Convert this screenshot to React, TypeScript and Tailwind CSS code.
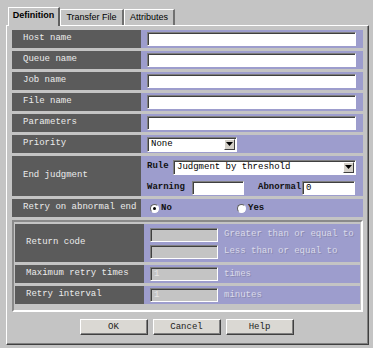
import React from 'react';

const mono = { fontFamily: '"Liberation Mono", "Courier New", monospace' };
const sans = { fontFamily: '"Liberation Sans", Arial, sans-serif' };

// sunken edit box
function Field({ w, value, disabled }: { w?: string; value?: string; disabled?: boolean }) {
  return (
    <div
      className={`h-[14px] shrink-0 ${w ?? 'flex-1'} border border-t-[#808080] border-l-[#808080] border-b-white border-r-white shadow-[inset_1px_1px_0_#404040] flex items-center pl-[3px] text-[9px] leading-none ${
        disabled ? 'bg-[#c4c4c4] text-[#e6e6e6]' : 'bg-white text-black'
      }`}
      style={mono}
    >
      {value}
    </div>
  );
}

function Select({ w, value }: { w?: string; value: string }) {
  return (
    <div
      className={`h-[15px] ${w ?? 'flex-1'} bg-white border border-t-[#808080] border-l-[#808080] border-b-white border-r-white shadow-[inset_1px_1px_0_#404040] flex items-center text-[9px] leading-none text-black`}
      style={mono}
    >
      <span className="flex-1 pl-[3px] pt-[1px]">{value}</span>
      <span className="w-[11px] h-[11px] mr-[1px] bg-[#d4d0c8] border border-t-white border-l-white border-b-[#404040] border-r-[#404040] flex items-center justify-center">
        <svg width="7" height="4" viewBox="0 0 7 4">
          <path d="M0 0h7L3.5 4z" fill="#000" />
        </svg>
      </span>
    </div>
  );
}

function Row({ label, h = 'h-[18px]', children, cls }: { label: string; h?: string; children?: React.ReactNode; cls?: string }) {
  return (
    <div className={`flex ${h}`}>
      <div
        className="w-[129px] shrink-0 bg-[#5b5b5b] text-[#ececec] text-[9px] flex items-center pl-[11px] whitespace-pre"
        style={mono}
      >
        {label}
      </div>
      <div className={`flex-1 min-w-0 bg-[#9d9dcd] pl-[6px] pr-[7px] flex ${cls ?? 'items-center'}`}>{children}</div>
    </div>
  );
}

function Radio({ on, label, w }: { on?: boolean; label: string; w?: string }) {
  return (
    <div className={`flex items-center gap-[2px] ${w ?? ''}`}>
      <span className="w-[9px] h-[9px] shrink-0 rounded-full bg-white border border-t-[#606060] border-l-[#606060] border-b-white border-r-white flex items-center justify-center">
        {on && <span className="w-[3px] h-[3px] rounded-full bg-black" />}
      </span>
      <span className="text-[9px] font-bold text-[#111] leading-none" style={mono}>
        {label}
      </span>
    </div>
  );
}

function Btn({ label }: { label: string }) {
  return (
    <button
      className="w-[68px] h-[16px] bg-[#dad8d3] border border-t-white border-l-white border-b-[#404040] border-r-[#404040] shadow-[inset_-1px_-1px_0_#808080] text-[9px] text-[#222] leading-none"
      style={mono}
    >
      {label}
    </button>
  );
}

function Dim({ children }: { children: React.ReactNode }) {
  return (
    <span className="ml-[6px] whitespace-nowrap text-[9px] leading-none text-[#dadaea] [text-shadow:1px_1px_0_#8a8ab0]" style={mono}>
      {children}
    </span>
  );
}

export default function App() {
  return (
    <div className="w-[373px] h-[348px] bg-[#c4c4c4] overflow-hidden">
      {/* tabs */}
      <div className="flex items-end pl-[8px] pt-[7px] h-[25px]" style={sans}>
        <div className="relative z-10 w-[52px] h-[19px] -mb-[1px] bg-[#c4c4c4] border-l border-t border-white border-r-2 border-r-[#606060] text-[9px] font-bold text-black flex items-center justify-center pb-[2px]">
          Definition
        </div>
        <div className="w-[64px] h-[16px] bg-[#c4c4c4] border-l border-t border-white border-r-2 border-r-[#707070] text-[9px] text-black flex items-center justify-center">
          Transfer File
        </div>
        <div className="w-[51px] h-[16px] bg-[#c4c4c4] border-l border-t border-white border-r-2 border-r-[#707070] text-[9px] text-black flex items-center justify-center">
          Attributes
        </div>
      </div>

      {/* panel */}
      <div className="ml-[6px] w-[363px] h-[320px] border-l border-t border-white border-r border-b border-r-[#404040] border-b-[#404040] shadow-[inset_-1px_-1px_0_#808080] pl-[5px] pr-[5px] pt-[4px] flex flex-col">
        <div className="flex flex-col gap-[3px]">
          <Row label="Host name">
            <Field />
          </Row>
          <Row label="Queue name">
            <Field />
          </Row>
          <Row label="Job name">
            <Field />
          </Row>
          <Row label="File name">
            <Field />
          </Row>
          <Row label="Parameters">
            <Field />
          </Row>
          <Row label="Priority">
            <Select w="w-[90px]" value="None" />
          </Row>
          <Row label="End judgment" h="h-[40px]" cls="flex-col pt-[4px] gap-[7px]">
            <div className="flex items-center h-[14px]">
              <span className="text-[9px] font-bold text-[#111] w-[26px]" style={mono}>
                Rule
              </span>
              <Select value="Judgment by threshold" />
            </div>
            <div className="flex items-center h-[14px]">
              <span className="text-[9px] font-bold text-[#111] w-[45px]" style={mono}>
                Warning
              </span>
              <Field w="w-[52px]" />
              <span className="text-[9px] font-bold text-[#111] ml-[14px] w-[44px]" style={mono}>
                Abnormal
              </span>
              <Field w="w-[53px]" value="0" />
            </div>
          </Row>
          <Row label="Retry on abnormal end">
            <div className="flex items-center pl-[3px]">
              <Radio on label="No" w="w-[87px]" />
              <Radio label="Yes" />
            </div>
          </Row>

          {/* retry group */}
          <div className="border-2 border-t-[#8a8a8a] border-l-[#8a8a8a] border-b-white border-r-white px-[1px] pt-[2px] pb-[6px] flex flex-col gap-[3px]">
            <Row label="Return code" h="h-[38px]" cls="flex-col justify-center gap-[3px]">
              <div className="flex items-center">
                <Field w="w-[68px]" disabled />
                <Dim>Greater than or equal to</Dim>
              </div>
              <div className="flex items-center">
                <Field w="w-[68px]" disabled />
                <Dim>Less than or equal to</Dim>
              </div>
            </Row>
            <Row label="Maximum retry times">
              <Field w="w-[68px]" value="1" disabled />
              <Dim>times</Dim>
            </Row>
            <Row label="Retry interval">
              <Field w="w-[68px]" value="1" disabled />
              <Dim>minutes</Dim>
            </Row>
          </div>
        </div>

        <div className="flex justify-center gap-[5px] mt-[7px] -ml-[2px]">
          <Btn label="OK" />
          <Btn label="Cancel" />
          <Btn label="Help" />
        </div>
      </div>
    </div>
  );
}
